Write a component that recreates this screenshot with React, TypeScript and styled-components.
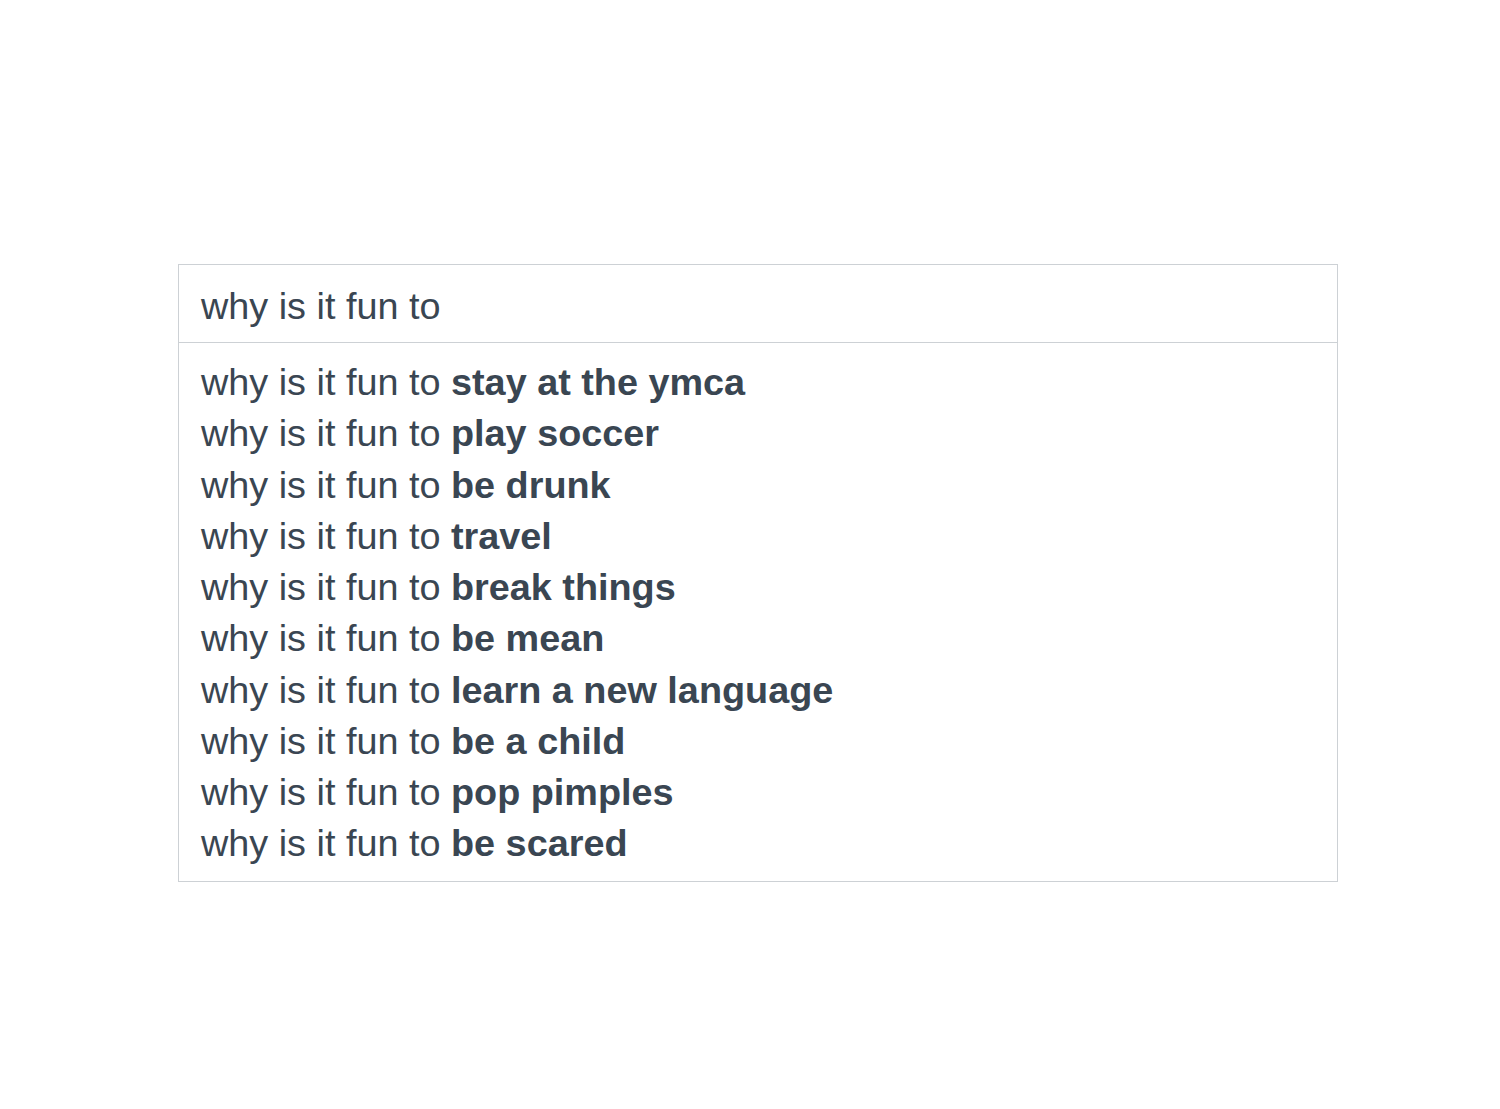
import React from "react";
import styled, { createGlobalStyle } from "styled-components";

const GlobalStyle = createGlobalStyle`
  html, body {
    margin: 0;
    padding: 0;
    background: #ffffff;
  }
  body {
    font-family: "Liberation Sans", Arial, sans-serif;
  }
`;

const Page = styled.main`
  width: 1500px;
  height: 1109px;
  padding-top: 264px;
  padding-left: 178px;
  box-sizing: border-box;
`;

const SearchBox = styled.section`
  width: 1160px;
  border: 1.5px solid #cdd1d5;
  box-sizing: border-box;
  color: #3a4652;
  font-size: 37.8px;
`;

const QueryRow = styled.div`
  height: 78px;
  display: flex;
  align-items: center;
  padding: 6px 22px 0;
  border-bottom: 1.5px solid #cdd1d5;
  box-sizing: border-box;
`;

const SuggestionList = styled.ul`
  list-style: none;
  margin: 0;
  padding: 14px 22px 11px;
`;

const Suggestion = styled.li`
  height: 51.25px;
  line-height: 51.25px;
  white-space: nowrap;
`;

const Completion = styled.b`
  font-weight: 700;
`;

const query = "why is it fun to";

const completions = [
  "stay at the ymca",
  "play soccer",
  "be drunk",
  "travel",
  "break things",
  "be mean",
  "learn a new language",
  "be a child",
  "pop pimples",
  "be scared",
];

export default function App() {
  return (
    <>
      <GlobalStyle />
      <Page>
        <SearchBox>
          <QueryRow>{query}</QueryRow>
          <SuggestionList>
            {completions.map((c) => (
              <Suggestion key={c}>
                {query} <Completion>{c}</Completion>
              </Suggestion>
            ))}
          </SuggestionList>
        </SearchBox>
      </Page>
    </>
  );
}
